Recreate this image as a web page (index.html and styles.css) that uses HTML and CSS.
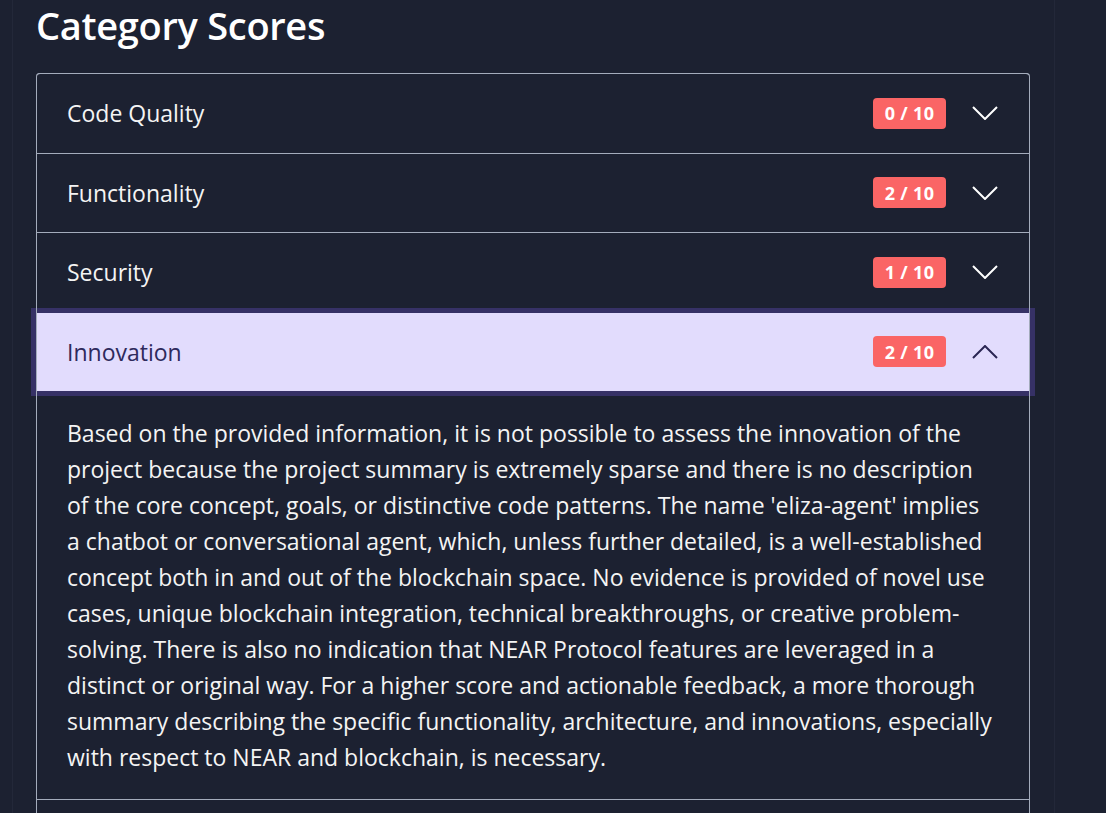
FILE: index.html
```html
<!DOCTYPE html>
<html lang="en">
<head>
<meta charset="utf-8">
<title>Category Scores</title>
<link rel="stylesheet" href="styles.css">
</head>
<body>
<div class="page">
  <h2 class="title">Category Scores</h2>
  <div class="accordion">
    <div class="item">
      <button class="head">
        <span class="label">Code Quality</span>
        <span class="badge">0 / 10</span>
        <svg class="chev" width="26" height="14" viewBox="0 0 26 14"><path d="M1 1 L13 13 L25 1" fill="none" stroke="currentColor" stroke-width="2"/></svg>
      </button>
    </div>
    <div class="item">
      <button class="head">
        <span class="label">Functionality</span>
        <span class="badge">2 / 10</span>
        <svg class="chev" width="26" height="14" viewBox="0 0 26 14"><path d="M1 1 L13 13 L25 1" fill="none" stroke="currentColor" stroke-width="2"/></svg>
      </button>
    </div>
    <div class="item">
      <button class="head">
        <span class="label">Security</span>
        <span class="badge">1 / 10</span>
        <svg class="chev" width="26" height="14" viewBox="0 0 26 14"><path d="M1 1 L13 13 L25 1" fill="none" stroke="currentColor" stroke-width="2"/></svg>
      </button>
    </div>
    <div class="item open">
      <button class="head active">
        <span class="label">Innovation</span>
        <span class="badge">2 / 10</span>
        <svg class="chev" width="26" height="14" viewBox="0 0 26 14"><path d="M1 13 L13 1 L25 13" fill="none" stroke="currentColor" stroke-width="2"/></svg>
      </button>
      <div class="panel">
        <p>Based on the provided information, it is not possible to assess the innovation of the project because the project summary is extremely sparse and there is no description of the core concept, goals, or distinctive code patterns. The name 'eliza-agent' implies a chatbot or conversational agent, which, unless further detailed, is a well-established concept both in and out of the blockchain space. No evidence is provided of novel use cases, unique blockchain integration, technical breakthroughs, or creative problem-solving. There is also no indication that NEAR Protocol features are leveraged in a distinct or original way. For a higher score and actionable feedback, a more thorough summary describing the specific functionality, architecture, and innovations, especially with respect to NEAR and blockchain, is necessary.</p>
      </div>
    </div>
    <div class="item">
      <button class="head">
        <span class="label">Documentation</span>
        <span class="badge">0 / 10</span>
        <svg class="chev" width="26" height="14" viewBox="0 0 26 14"><path d="M1 1 L13 13 L25 1" fill="none" stroke="currentColor" stroke-width="2"/></svg>
      </button>
    </div>
  </div>
</div>
</body>
</html>
```
FILE: styles.css
```css
html, body {
  margin: 0;
  padding: 0;
  background: #1c2131;
  height: 100%;
  overflow: hidden;
}
body {
  font-family: "Open Sans", "Noto Sans", sans-serif;
  color: #f4f4f4;
}
.page {
  margin: 0 51px 0 12px;
  border-left: 1px solid #232839;
  border-right: 1px solid #232839;
  padding: 0 24px 0 23px;
  min-height: 100%;
  box-sizing: border-box;
}
.title {
  margin: 0;
  padding-top: 2px;
  height: 71px;
  font-size: 38px;
  font-weight: 600;
  line-height: 46px;
  color: #ffffff;
  letter-spacing: -0.3px;
}
.accordion {
  position: relative;
  border-top: 1px solid #a4acbc;
  border-radius: 4px 4px 0 0;
}
.accordion::after {
  content: "";
  position: absolute;
  inset: -1px 0 0 0;
  border: 1px solid #a4acbc;
  border-bottom: none;
  border-radius: 4px 4px 0 0;
  pointer-events: none;
  z-index: 2;
}
.item {
  border-bottom: 1px solid #a4acbc;
}
.head {
  display: flex;
  align-items: center;
  width: 100%;
  height: 78.5px;
  margin: 0;
  border: 0;
  padding: 0 32px 0 31px;
  background: transparent;
  color: #f4f4f4;
  font: inherit;
  text-align: left;
  cursor: pointer;
  position: relative;
}
.label {
  flex: 1;
  font-size: 23px;
}
.badge {
  background: #fa6565;
  color: #ffffff;
  font-weight: 700;
  font-size: 18px;
  letter-spacing: 0.3px;
  border-radius: 4px;
  height: 31px;
  width: 73px;
  display: flex;
  align-items: center;
  justify-content: center;
  margin-right: 26px;
}
.chev {
  display: block;
  color: #ffffff;
}
.head.active {
  background: #e2dcfd;
  color: #2e2a5c;
  box-shadow: 0 0 0 5px #363166;
  z-index: 1;
}
.head.active .chev {
  color: #2a2553;
}
.panel {
  padding: 24px 34px 24px 31px;
}
.panel p {
  margin: 0;
  font-size: 23px;
  line-height: 36px;
  color: #f4f4f4;
}
```
